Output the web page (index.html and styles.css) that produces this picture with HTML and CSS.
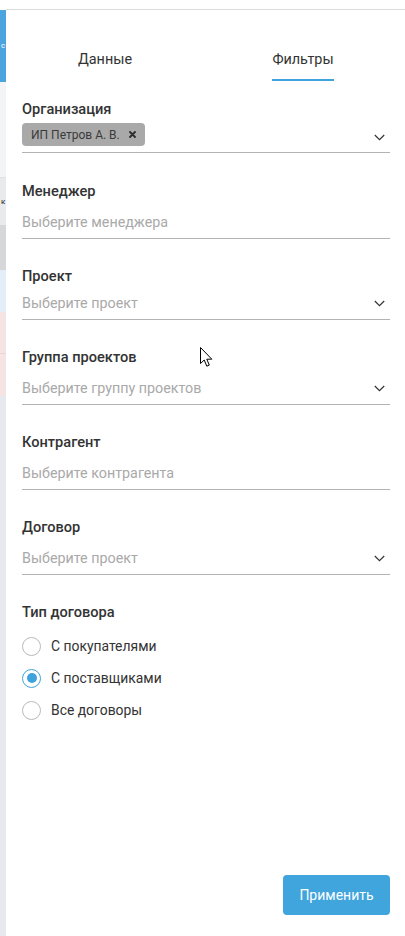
FILE: index.html
```html
<!DOCTYPE html>
<html lang="ru">
<head>
<meta charset="utf-8">
<title>Фильтры</title>
<link rel="stylesheet" href="styles.css">
</head>
<body>
<div class="page">
  <div class="strip">
    <div class="s-top"></div>
    <div class="s-blue"><span class="s-text s-text-white">с</span></div>
    <div class="s-light"></div>
    <div class="s-row"><span class="s-text">к</span></div>
    <div class="s-gray"></div>
    <div class="s-bluelt"></div>
    <div class="s-pink s-pink-first"></div>
    <div class="s-pink"></div>
    <div class="s-rest"></div>
  </div>

  <div class="panel">
    <div class="tabs">
      <div class="tab"><span class="tab-text">Данные</span></div>
      <div class="tab"><span class="tab-text tab-active">Фильтры</span></div>
    </div>

    <div class="form">
      <div class="field field-first">
        <div class="label">Организация</div>
        <div class="input input-chips">
          <span class="chip">ИП Петров А. В.
            <svg class="chip-x" width="7" height="7" viewBox="0 0 7 7"><path d="M1 1L6 6M6 1L1 6" stroke="#2b2b2b" stroke-width="1.8" stroke-linecap="round"/></svg>
          </span>
          <svg class="chev" width="11" height="7" viewBox="0 0 11 7"><path d="M0.8 1L5.5 5.7L10.2 1" fill="none" stroke="#333" stroke-width="1.2"/></svg>
        </div>
      </div>

      <div class="field">
        <div class="label">Менеджер</div>
        <div class="input"><span class="placeholder">Выберите менеджера</span></div>
      </div>

      <div class="field field-tight">
        <div class="label">Проект</div>
        <div class="input"><span class="placeholder">Выберите проект</span>
          <svg class="chev" width="11" height="7" viewBox="0 0 11 7"><path d="M0.8 1L5.5 5.7L10.2 1" fill="none" stroke="#333" stroke-width="1.2"/></svg>
        </div>
      </div>

      <div class="field">
        <div class="label">Группа проектов</div>
        <div class="input"><span class="placeholder">Выберите группу проектов</span>
          <svg class="chev" width="11" height="7" viewBox="0 0 11 7"><path d="M0.8 1L5.5 5.7L10.2 1" fill="none" stroke="#333" stroke-width="1.2"/></svg>
        </div>
      </div>

      <div class="field">
        <div class="label">Контрагент</div>
        <div class="input"><span class="placeholder">Выберите контрагента</span></div>
      </div>

      <div class="field">
        <div class="label">Договор</div>
        <div class="input"><span class="placeholder">Выберите проект</span>
          <svg class="chev" width="11" height="7" viewBox="0 0 11 7"><path d="M0.8 1L5.5 5.7L10.2 1" fill="none" stroke="#333" stroke-width="1.2"/></svg>
        </div>
      </div>

      <div class="field">
        <div class="label">Тип договора</div>
        <div class="radios">
          <div class="radio-row"><span class="radio"></span><span class="radio-text">С покупателями</span></div>
          <div class="radio-row"><span class="radio radio-on"></span><span class="radio-text">С поставщиками</span></div>
          <div class="radio-row"><span class="radio"></span><span class="radio-text">Все договоры</span></div>
        </div>
      </div>
    </div>

    <div class="actions">
      <button class="apply">Применить</button>
    </div>
  </div>
</div>

<svg class="cursor" width="14" height="21" viewBox="0 0 14 21"><path d="M0.5 0.5L0.5 16.5L4.2 13L6.8 19.2L9.3 18.1L6.8 12.2L11.8 12.2Z" fill="#fff" stroke="#000" stroke-width="1" stroke-linejoin="round"/></svg>
</body>
</html>
```

FILE: styles.css
```css
* { box-sizing: border-box; }

html, body {
  margin: 0;
  padding: 0;
  background: #fff;
  height: 936px;
  overflow: hidden;
  font-family: Roboto, "Noto Sans", "Liberation Sans", sans-serif;
  color: #333;
}

.page {
  display: flex;
  height: 936px;
}

/* background page peeking on the left */
.strip {
  width: 6px;
  flex: none;
  display: flex;
  flex-direction: column;
  overflow: hidden;
}
.strip > div { overflow: hidden; white-space: nowrap; display: flex; align-items: center; }
.s-top { height: 10px; background: #fff; }
.s-blue { height: 72px; background: #4ba3df; }
.s-light { height: 96px; background: #f3f4f6; border-bottom: 1px solid #e0e2e6; }
.s-row { height: 47px; background: #e8eaee; }
.s-gray { height: 45px; background: #d6d7d9; }
.s-bluelt { height: 42px; background: #e3eef8; }
.s-pink { height: 42px; background: #f6e4e4; }
.s-pink-first { height: 42px; border-bottom: 1px solid #ead3d3; }
.s-rest { flex: 1; background: #e6e9ee; }
.s-text { font-size: 8px; line-height: 10px; color: #222; padding-left: 1px; }
.s-text-white { color: #fff; }

.panel {
  flex: 1;
  display: flex;
  flex-direction: column;
  margin-top: 9px;
  border-top: 1px solid #dcdcdc;
  background: #fff;
}

.tabs {
  display: flex;
  height: 71px;
  padding-right: 3px;
}
.tab {
  flex: 1;
  display: flex;
  justify-content: center;
  padding-top: 40px;
}
.tab-text {
  font-size: 14.4px;
  line-height: 20px;
  height: 31px;
  padding-bottom: 9px;
  border-bottom: 2px solid transparent;
  color: #333;
}
.tab-active { border-bottom-color: #3ea3dc; }

.form {
  padding: 0 15px 0 16px;
  display: flex;
  flex-direction: column;
}

.field { margin-top: 27px; }
.field-first { margin-top: 18px; }
.field-first + .field { margin-top: 28px; }

.label {
  font-size: 14.6px;
  line-height: 20px;
  font-weight: 500;
  color: #333;
}

.input {
  margin-top: 5px;
  height: 33px;
  border-bottom: 1px solid #b3b3b3;
  display: flex;
  align-items: center;
  justify-content: space-between;
}
.field-tight .input { margin-top: 1px; }
.input-chips {
  margin-top: 4px;
  height: 30px;
  align-items: flex-start;
}
.placeholder {
  font-size: 14.3px;
  color: #a9a9a9;
  line-height: 20px;
}
.chev { margin-right: 5px; flex: none; }
.input-chips .chev { margin-top: 11px; }

.chip {
  display: inline-flex;
  align-items: center;
  gap: 9px;
  height: 23px;
  padding: 0 9px;
  background: #a9a9a9;
  border-radius: 4px;
  font-size: 12px;
  color: #3a3a3a;
}
.chip-x { flex: none; }

.radios {
  margin-top: 8px;
  display: flex;
  flex-direction: column;
}
.radio-row {
  height: 32px;
  display: flex;
  align-items: center;
  gap: 10px;
}
.radio {
  width: 19px;
  height: 19px;
  border-radius: 50%;
  border: 1px solid #b9b9b9;
  background: #fff;
  display: flex;
  align-items: center;
  justify-content: center;
  flex: none;
}
.radio-on { border-color: #3ea3dc; }
.radio-on::after {
  content: "";
  width: 10px;
  height: 10px;
  border-radius: 50%;
  background: #3ea3dc;
}
.radio-text { font-size: 13.9px; color: #333; }

.actions {
  margin-top: auto;
  display: flex;
  justify-content: flex-end;
  padding: 0 15px 21px 0;
}
.apply {
  width: 107px;
  height: 40px;
  border: none;
  border-radius: 4px;
  background: #40a4dd;
  color: #fff;
  font-family: inherit;
  font-size: 14px;
}

.cursor {
  position: absolute;
  left: 200px;
  top: 347px;
}
```
